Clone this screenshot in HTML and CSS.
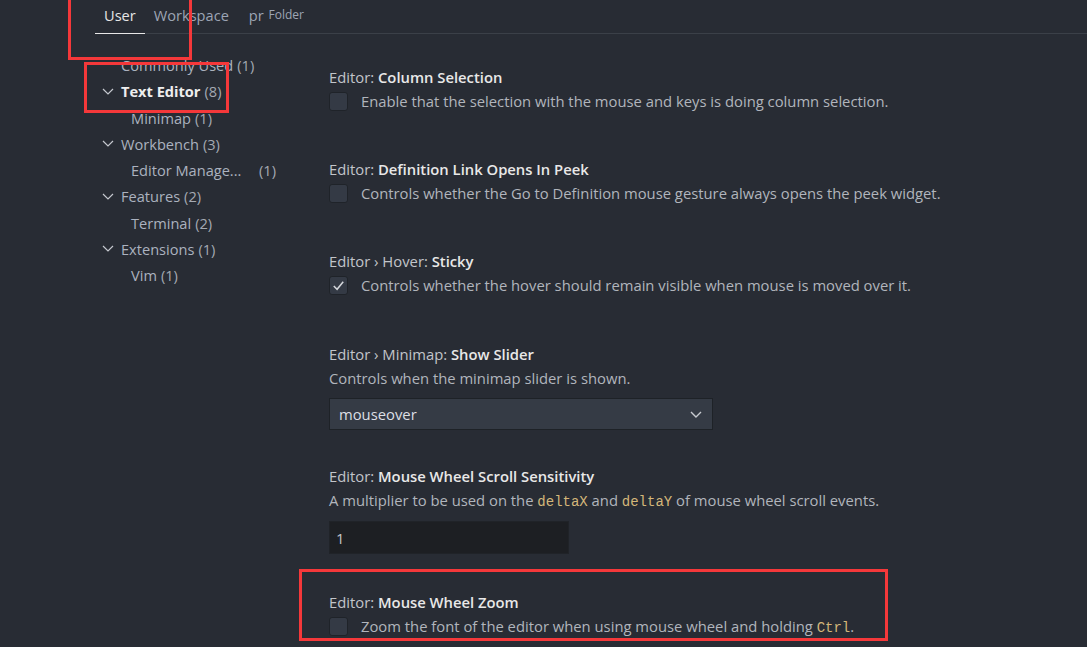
FILE: index.html
```html
<!DOCTYPE html>
<html lang="en">
<head>
<meta charset="utf-8">
<title>Settings</title>
<link rel="stylesheet" href="styles.css">
</head>
<body>
<div class="app">
  <header class="tabs">
    <div class="tab active">User</div>
    <div class="tab">Workspace</div>
    <div class="tab folder">pr <span class="folder-label">Folder</span></div>
  </header>
  <div class="main">
    <nav class="tree">
      <div class="row l1 nochev"><span class="label">Commonly Used</span> <span class="count">(1)</span></div>
      <div class="row l0 strong"><svg class="chev" viewBox="0 0 12 7" width="12" height="7"><polyline points="1,1 6,6 11,1"/></svg><span class="label">Text Editor</span> <span class="count">(8)</span></div>
      <div class="row l1"><span class="label">Minimap</span> <span class="count">(1)</span></div>
      <div class="row l0"><svg class="chev" viewBox="0 0 12 7" width="12" height="7"><polyline points="1,1 6,6 11,1"/></svg><span class="label">Workbench</span> <span class="count">(3)</span></div>
      <div class="row l1"><span class="label trunc">Editor Manage...</span><span class="count">(1)</span></div>
      <div class="row l0"><svg class="chev" viewBox="0 0 12 7" width="12" height="7"><polyline points="1,1 6,6 11,1"/></svg><span class="label">Features</span> <span class="count">(2)</span></div>
      <div class="row l1"><span class="label">Terminal</span> <span class="count">(2)</span></div>
      <div class="row l0"><svg class="chev" viewBox="0 0 12 7" width="12" height="7"><polyline points="1,1 6,6 11,1"/></svg><span class="label">Extensions</span> <span class="count">(1)</span></div>
      <div class="row l1"><span class="label">Vim</span> <span class="count">(1)</span></div>
    </nav>
    <main class="settings">
      <section class="item item-bool">
        <div class="title"><span class="cat">Editor: </span><span class="name">Column Selection</span></div>
        <div class="bool-row"><span class="checkbox"></span><span class="desc">Enable that the selection with the mouse and keys is doing column selection.</span></div>
      </section>
      <section class="item item-bool">
        <div class="title"><span class="cat">Editor: </span><span class="name">Definition Link Opens In Peek</span></div>
        <div class="bool-row"><span class="checkbox"></span><span class="desc">Controls whether the Go to Definition mouse gesture always opens the peek widget.</span></div>
      </section>
      <section class="item item-bool">
        <div class="title"><span class="cat">Editor › Hover: </span><span class="name">Sticky</span></div>
        <div class="bool-row"><span class="checkbox checked"><svg viewBox="0 0 18 18" width="18" height="18"><polyline points="4,9.5 7.5,13 14,5"/></svg></span><span class="desc">Controls whether the hover should remain visible when mouse is moved over it.</span></div>
      </section>
      <section class="item item-select">
        <div class="title"><span class="cat">Editor › Minimap: </span><span class="name">Show Slider</span></div>
        <div class="desc-line">Controls when the minimap slider is shown.</div>
        <div class="select"><span>mouseover</span><svg class="select-chev" viewBox="0 0 12 7" width="12" height="7"><polyline points="1,1 6,6 11,1"/></svg></div>
      </section>
      <section class="item">
        <div class="title"><span class="cat">Editor: </span><span class="name">Mouse Wheel Scroll Sensitivity</span></div>
        <div class="desc-line">A multiplier to be used on the <code>deltaX</code> and <code>deltaY</code> of mouse wheel scroll events.</div>
        <div class="input">1</div>
      </section>
      <section class="item item-bool">
        <div class="title"><span class="cat">Editor: </span><span class="name">Mouse Wheel Zoom</span></div>
        <div class="bool-row"><span class="checkbox"></span><span class="desc">Zoom the font of the editor when using mouse wheel and holding <code>Ctrl</code>.</span></div>
      </section>
    </main>
  </div>
  <div class="mark mark-tabs"></div>
  <div class="mark mark-tree"></div>
  <div class="mark mark-zoom"></div>
</div>
</body>
</html>
```
FILE: styles.css
```css
* { box-sizing: border-box; }
html, body {
  margin: 0;
  padding: 0;
  background: #282c34;
}
body {
  font-family: "Open Sans", "Noto Sans", sans-serif;
  font-size: 14.8px;
  color: #abb2bf;
  overflow: hidden;
}
.app {
  position: relative;
  width: 1087px;
  height: 647px;
  overflow: hidden;
}
.tabs {
  display: flex;
  margin-left: 95px;
  height: 34px;
  border-bottom: 1px solid #3b4048;
}
.tab {
  padding: 0 9px;
  line-height: 30px;
  height: 33px;
  font-size: 14.6px;
  color: #9da5b4;
}
.tab.active {
  color: #e6e6e6;
  box-shadow: 0 1px 0 #e7e7e7;
}
.tab.folder {
  padding-left: 11px;
}
.folder-label {
  font-size: 12px;
  position: relative;
  top: -2px;
  margin-left: 1px;
}
.main {
  display: flex;
}
.tree {
  width: 329px;
  padding-top: 18px;
  padding-left: 95px;
  flex: none;
  font-size: 14.6px;
}
.row {
  display: flex;
  align-items: center;
  height: 26.25px;
  white-space: nowrap;
  color: #abb2bf;
}
.row .label { margin-right: 4px; }
.row.l0 { padding-left: 7px; }
.row.l1 { padding-left: 36px; }
.row.nochev { padding-left: 26px; }
.chev {
  width: 12px;
  height: 7px;
  margin-right: 7px;
  fill: none;
  stroke: #c5c8ce;
  stroke-width: 1.2;
}
.row.strong .label {
  font-weight: 700;
  color: #eeeeee;
}
.row .label.trunc {
  width: 128px;
  margin-right: 0;
}
.count { color: #a4a9b2; }
.settings {
  flex: 1;
  padding-top: 32px;
}
.item {
  padding-bottom: 37px;
}
.item-bool .bool-row {
  margin-bottom: 7px;
}
.item-select {
  padding-top: 1px;
  padding-bottom: 35px;
}
.item-select .select {
  margin-top: 7px;
}
.title {
  line-height: 22px;
  white-space: nowrap;
}
.cat { color: #c2c5ca; }
.name { font-weight: 600; color: #e8e8e8; }
.bool-row {
  display: flex;
  align-items: center;
  height: 26px;
}
.checkbox {
  width: 19px;
  height: 19px;
  flex: none;
  border-radius: 3px;
  background: #343a45;
  border: 1px solid #1f2329;
  margin-right: 13px;
  display: flex;
}
.checkbox svg {
  width: 17px;
  height: 17px;
  fill: none;
  stroke: #d4d7dc;
  stroke-width: 1.6;
}
.desc, .desc-line {
  color: #b1b5bc;
  white-space: nowrap;
}
.desc-line {
  line-height: 26px;
}
code {
  font-family: "Liberation Mono", "DejaVu Sans Mono", monospace;
  font-size: 14px;
  color: #d4b77a;
}
.select {
  margin-top: 6px;
  width: 384px;
  height: 32px;
  background: #353b45;
  border: 1px solid #1e2227;
  display: flex;
  align-items: center;
  justify-content: space-between;
  padding: 0 10px 0 9px;
  color: #dcdfe4;
}
.select-chev {
  fill: none;
  stroke: #c8cbd0;
  stroke-width: 1.4;
}
.input {
  margin-top: 6px;
  width: 240px;
  height: 33px;
  background: #1d1f23;
  border: 1px solid #202328;
  display: flex;
  align-items: center;
  padding-left: 6px;
  color: #c4c7cc;
}
.mark {
  position: absolute;
  border: 3px solid #f5383a;
}
.mark-tabs { left: 68px; top: -3px; width: 124px; height: 63px; }
.mark-tree { left: 84px; top: 62px; width: 145px; height: 51px; }
.mark-zoom { left: 299px; top: 569px; width: 589px; height: 72px; }
```
